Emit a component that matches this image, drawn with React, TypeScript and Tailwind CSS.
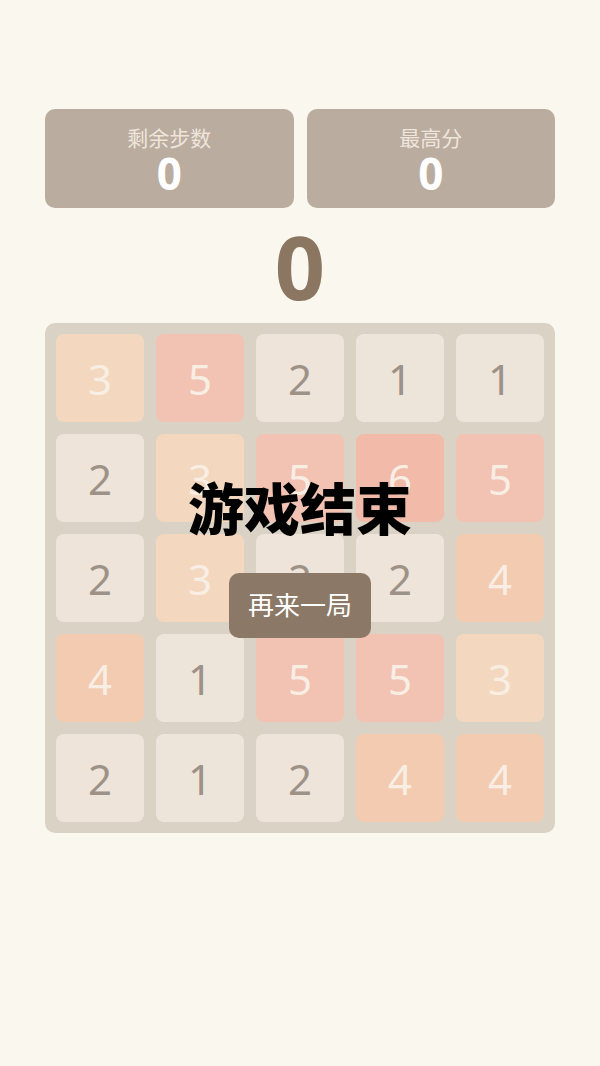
const board: number[][] = [
  [3, 5, 2, 1, 1],
  [2, 3, 5, 6, 5],
  [2, 3, 2, 2, 4],
  [4, 1, 5, 5, 3],
  [2, 1, 2, 4, 4],
];

const tileStyle: Record<number, string> = {
  1: 'bg-[#eee5da] text-[#9d9288]',
  2: 'bg-[#eee4d9] text-[#9d9288]',
  3: 'bg-[#f3d8bf] text-[#f8eee4]',
  4: 'bg-[#f2cbb0] text-[#f8eee4]',
  5: 'bg-[#f2c2b2] text-[#f8eee4]',
  6: 'bg-[#f1baa9] text-[#f8eee4]',
};

function ScoreBox({ label, value }: { label: string; value: number }) {
  return (
    <div className="flex-1 h-[99px] rounded-[10px] bg-[#baac9f] flex flex-col items-center justify-center">
      <div className="text-[21px] leading-[28px] text-[#efe5db]">{label}</div>
      <div className="text-[44px] leading-[42px] font-bold text-white">{value}</div>
    </div>
  );
}

export default function App() {
  return (
    <div
      className="min-h-[1066px] bg-[#faf7ef] px-[45px] pt-[109px]"
      style={{ fontFamily: '"Noto Sans", "Noto Sans CJK SC", sans-serif' }}
    >
      <div className="flex gap-[13px]">
        <ScoreBox label="剩余步数" value={0} />
        <ScoreBox label="最高分" value={0} />
      </div>

      <div className="h-[115px] flex items-center justify-center">
        <span className="text-[88px] leading-none font-bold text-[#8b7661]">0</span>
      </div>

      <div className="relative rounded-[10px] bg-[#dbd2c6] p-[11px]">
        <div className="grid grid-cols-5 gap-[12px]">
          {board.flat().map((v, i) => (
            <div
              key={i}
              className={`h-[88px] rounded-[8px] flex items-center justify-center text-[42px] ${tileStyle[v]}`}
            >
              {v}
            </div>
          ))}
        </div>

        <div className="absolute inset-0 flex flex-col items-center justify-center pb-[40px]">
          <div className="text-[56px] leading-[60px] font-black text-black">游戏结束</div>
          <button className="mt-[35px] h-[65px] px-[19px] rounded-[10px] bg-[#8b7866] text-white text-[26px]">
            再来一局
          </button>
        </div>
      </div>
    </div>
  );
}
